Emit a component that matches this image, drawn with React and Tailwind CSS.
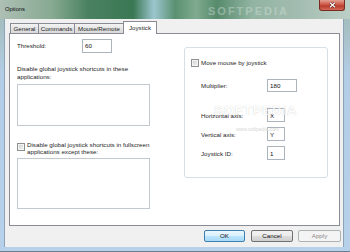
import React from 'react';

const Checkbox = () => (
  <div className="w-[8px] h-[8px] shrink-0 border border-[#8e8f8f] bg-[#f4f4f4] p-[1px]">
    <div className="w-full h-full bg-[linear-gradient(135deg,#cfd1d3,#f1f2f3)]" />
  </div>
);

const TextBox = ({ value, className }) => (
  <div className={`border border-[#abb3bd] bg-white pl-[2px] flex items-center text-[#111] ${className}`}>
    {value}
  </div>
);

const Tab = ({ label, width, active }) => (
  <div
    className={
      active
        ? `${width} h-[13px] -ml-px -mb-px z-10 bg-white border border-b-0 border-[#898c95] flex items-center justify-center`
        : `${width} h-[10px] -ml-px bg-[linear-gradient(#f3f3f3,#e5e5e5_50%,#d9d9d9)] border border-b-0 border-[#898c95] flex items-center justify-center`
    }
  >
    {label}
  </div>
);

const App = () => {
  return (
    <div className="w-[350px] h-[252px] relative overflow-hidden flex flex-col bg-[linear-gradient(#9fb8b0,#b3cde6_30%,#b8d1ea)] border-b border-[#6b7d90] font-['Liberation_Sans',Arial,sans-serif] text-[6.2px] text-[#1e1e1e]">
      {/* title bar */}
      <div className="h-[19px] shrink-0 flex items-start justify-between bg-[linear-gradient(90deg,#aebfb4_0%,#86a991_15%,#4a8260_25%,#3a7753_38%,#9cc6cf_44%,#5a9171_50%,#7faa8f_56%,#578b6c_62%,#92b4a2_72%,#a3bcb0_85%,#bccfc7_100%)]">
        <div className="pl-[5px] pt-[5px] text-[5.8px] text-[#0c0c0c]">Options</div>
        <div className="relative mr-[5px] w-[26px] h-[11px] rounded-b-[3px] border border-t-0 border-[#7a2a20] bg-[linear-gradient(#e4a091,#c9503f_50%,#b93b2b_60%,#d26b58)] flex items-center justify-center">
          <svg width="7" height="6" viewBox="0 0 7 6">
            <path d="M1 0.8 L6 5.2 M6 0.8 L1 5.2" stroke="#5a1a12" strokeWidth="2.4" />
            <path d="M1 0.8 L6 5.2 M6 0.8 L1 5.2" stroke="#ffffff" strokeWidth="1.3" />
          </svg>
        </div>
        <div className="absolute left-[208px] top-[3px] text-[11px] font-bold tracking-[2px] text-[#d8e4e0] opacity-40 pointer-events-none">SOFTPEDIA</div>
      </div>

      {/* client area */}
      <div className="ml-[4px] mr-[6px] h-[228px] bg-[#f0f0f0] border-x border-[#8fa3b8] flex flex-col">
        {/* tabs */}
        <div className="h-[14px] pl-[6px] flex items-end relative">
          <Tab label="General" width="w-[29px]" />
          <Tab label="Commands" width="w-[37px]" />
          <Tab label="Mouse/Remote" width="w-[50px]" />
          <Tab label="Joystick" width="w-[34px]" active />
        </div>

        {/* tab panel */}
        <div className="ml-[4px] w-[331px] h-[193px] bg-white border border-[#898c95] flex">
          {/* left column */}
          <div className="w-[140px] pl-[7px] flex flex-col">
            <div className="mt-[5px] h-[14px] flex items-center">
              <div className="w-[65px]">Threshold:</div>
              <TextBox value="60" className="w-[30px] h-[14px]" />
            </div>
            <div className="mt-[12px] leading-[8px]">
              Disable global joystick shortcuts in these
              <br />
              applications:
            </div>
            <div className="mt-[3px] w-[133px] h-[42px] border border-[#c3c9d1] bg-white" />
            <div className="mt-[15px] flex items-start">
              <div className="mt-[1.5px]">
                <Checkbox />
              </div>
              <div className="ml-[2px] leading-[7px]">
                Disable global joystick shortcuts in fullscreen
                <br />
                applications except these:
              </div>
            </div>
            <div className="mt-[3px] w-[133px] h-[51px] border border-[#c3c9d1] bg-white" />
          </div>

          {/* right group box */}
          <div className="ml-[34px] mt-[13px] w-[144px] h-[131px] border border-[#d5dfe5] rounded-[3px] flex flex-col">
            <div className="mt-[10px] pl-[6px] flex items-center">
              <Checkbox />
              <div className="ml-[2px]">Move mouse by joystick</div>
            </div>
            <div className="mt-[12px] pl-[16px] h-[13px] flex items-center">
              <div className="w-[66px]">Multiplier:</div>
              <TextBox value="180" className="w-[30px] h-[13px]" />
            </div>
            <div className="mt-[16px] pl-[16px] h-[14px] flex items-center">
              <div className="w-[66px]">Horizontal axis:</div>
              <TextBox value="X" className="w-[18px] h-[14px]" />
            </div>
            <div className="mt-[5px] pl-[16px] h-[14px] flex items-center">
              <div className="w-[66px]">Vertical axis:</div>
              <TextBox value="Y" className="w-[18px] h-[14px]" />
            </div>
            <div className="mt-[5px] pl-[16px] h-[14px] flex items-center">
              <div className="w-[66px]">Joystick ID:</div>
              <TextBox value="1" className="w-[18px] h-[14px]" />
            </div>
          </div>
        </div>

        {/* buttons */}
        <div className="mt-[4px] pr-[2px] flex justify-end">
          <div className="w-[41px] h-[12px] rounded-[2px] border border-[#3c7fb1] bg-[linear-gradient(#eaf6fd,#d9f0fc_50%,#bee6fd_50%,#a7d9f5)] flex items-center justify-center text-[#111]">
            OK
          </div>
          <div className="ml-[6px] w-[42px] h-[12px] rounded-[2px] border border-[#707070] bg-[linear-gradient(#f2f2f2,#ebebeb_50%,#dddddd_50%,#cfcfcf)] flex items-center justify-center text-[#111]">
            Cancel
          </div>
          <div className="ml-[5px] w-[43px] h-[12px] rounded-[2px] border border-[#adb2b5] bg-[#f4f4f4] flex items-center justify-center text-[#8a8a8a]">
            Apply
          </div>
        </div>
      </div>

      {/* watermark */}
      <div className="absolute left-[214px] top-[101px] text-[13px] font-bold tracking-[1px] text-white [text-shadow:0_0_1px_#9a9a9a] opacity-60 pointer-events-none">
        SOFTPEDIA
      </div>
      <div className="absolute left-[236px] top-[126px] text-[5px] text-[#d6d6d6] pointer-events-none">www.softpedia.com</div>
    </div>
  );
};

export default App;
